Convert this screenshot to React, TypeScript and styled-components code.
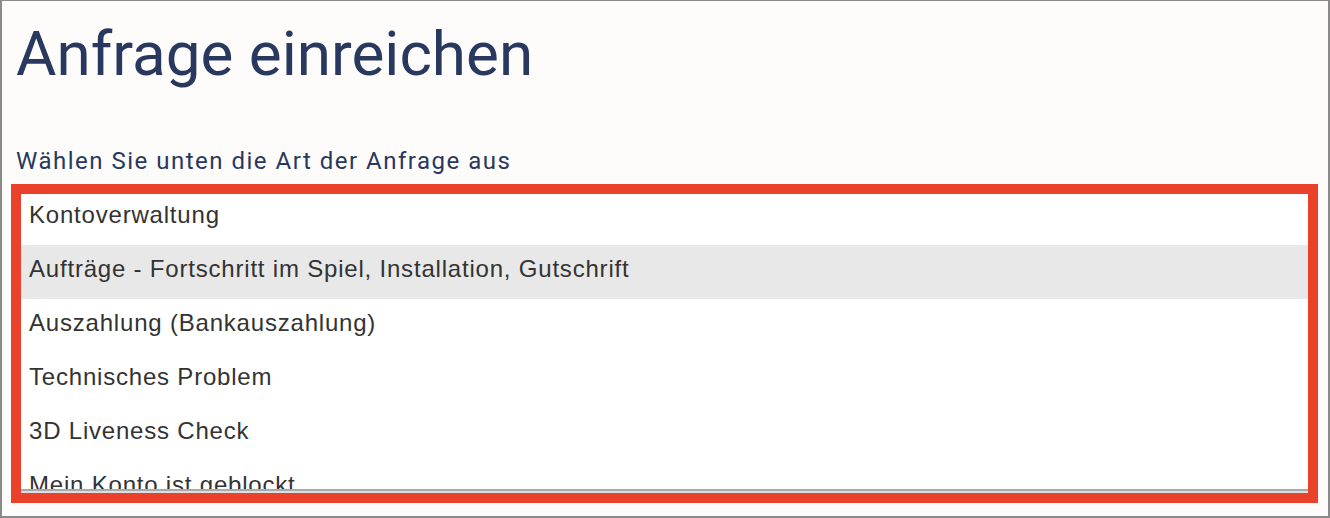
import React from "react";
import styled, { createGlobalStyle } from "styled-components";

const GlobalStyle = createGlobalStyle`
  html, body {
    margin: 0;
    padding: 0;
    background: #ffffff;
  }
`;

const options = [
  "Kontoverwaltung",
  "Aufträge - Fortschritt im Spiel, Installation, Gutschrift",
  "Auszahlung (Bankauszahlung)",
  "Technisches Problem",
  "3D Liveness Check",
  "Mein Konto ist geblockt",
  "Sonstiges",
];

const App: React.FC = () => {
  const hovered = 1;

  return (
    <>
      <GlobalStyle />
      <Frame>
        <Title>Anfrage einreichen</Title>
        <Subtitle>Wählen Sie unten die Art der Anfrage aus</Subtitle>
        <Highlight>
          <ListViewport>
            <OptionList>
              {options.map((label, i) => (
                <OptionRow key={label} $active={i === hovered}>
                  {label}
                </OptionRow>
              ))}
            </OptionList>
          </ListViewport>
        </Highlight>
      </Frame>
    </>
  );
};

export default App;

const Frame = styled.div`
  width: 1330px;
  height: 518px;
  box-sizing: border-box;
  border: 2px solid #8a8a8a;
  border-top-width: 1px;
  background: #fdfcfa;
  padding: 22px 0 0 14px;
  display: flex;
  flex-direction: column;
  overflow: hidden;
`;

const Title = styled.h1`
  margin: 0;
  font-family: Roboto, "Noto Sans", sans-serif;
  font-weight: 400;
  font-size: 62px;
  line-height: 62px;
  color: #28385e;
`;

const Subtitle = styled.p`
  margin: 64px 0 0;
  font-family: Roboto, "Noto Sans", sans-serif;
  font-weight: 400;
  font-size: 24px;
  line-height: 24px;
  letter-spacing: 1.5px;
  color: #28385e;
`;

const Highlight = styled.div`
  margin: 11px 0 0 -5px;
  width: 1307px;
  height: 319px;
  box-sizing: border-box;
  border: 10px solid #e9412a;
  background: #dedede;
`;

const ListViewport = styled.div`
  height: 295px;
  background: #ffffff;
  border-bottom: 2px solid #a9a9a9;
  overflow: hidden;
`;

const OptionList = styled.ul`
  list-style: none;
  margin: -3px 0 0;
  padding: 0;
`;

const OptionRow = styled.li<{ $active?: boolean }>`
  height: 54px;
  box-sizing: border-box;
  padding: 10px 8px 0;
  font-family: "Liberation Sans", Arial, sans-serif;
  font-size: 24px;
  line-height: 27px;
  letter-spacing: 0.8px;
  color: #333333;
  white-space: nowrap;
  background: ${(p) => (p.$active ? "#e8e8e8" : "transparent")};
`;
